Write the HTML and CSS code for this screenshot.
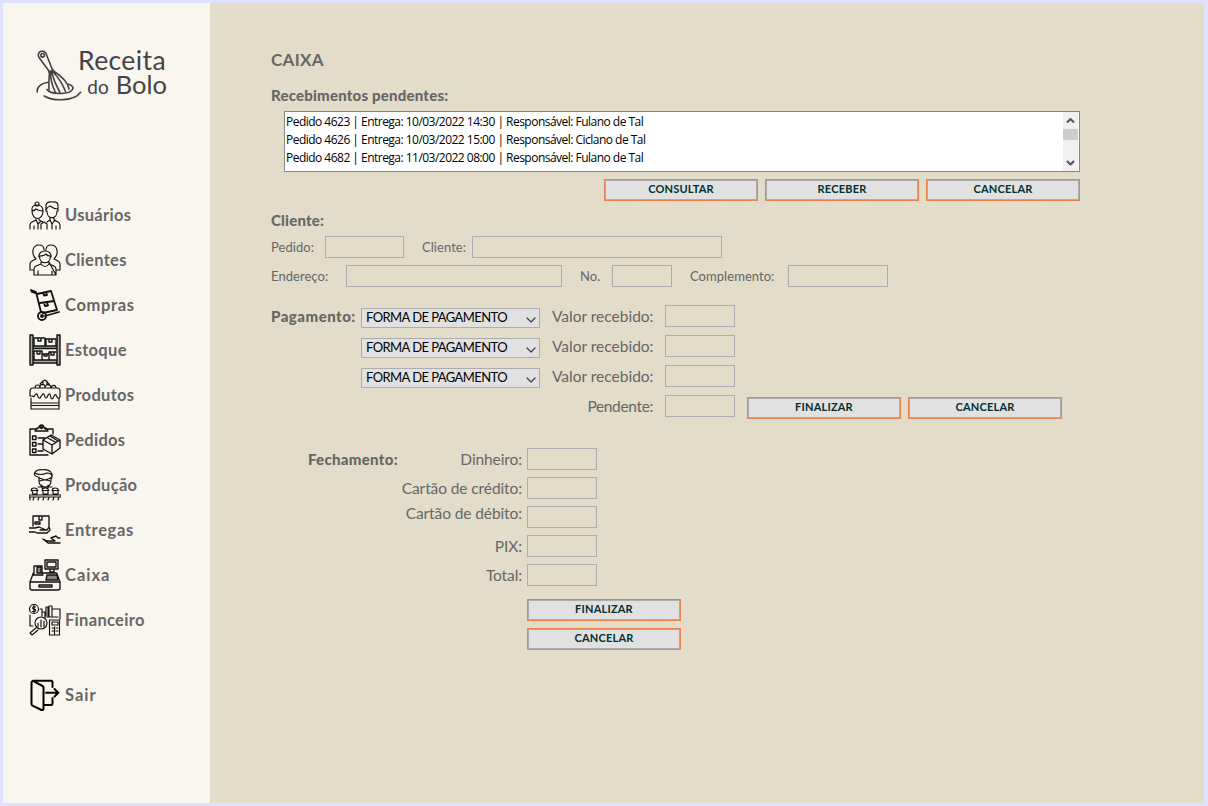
FILE: index.html
```html
<!DOCTYPE html>
<html lang="pt-BR">
<head>
<meta charset="utf-8">
<title>Receita do Bolo - Caixa</title>
<link rel="stylesheet" href="styles.css">
</head>
<body>
<div class="window">
  <aside class="sidebar">
    <div class="logo">
      <svg class="whisk" viewBox="0 0 48 56" width="48" height="56">
        <path d="M13 23 3 9.500C0 3.500 7.500 1 10 5.500L16.500 22M12.500 24l5-2"/><circle cx="6.600" cy="7.300" r="1.800"/>
        <path d="M13.500 24q-1 10-.5 18M14.500 24q0 11 5 20.500M15.500 24q3 11 8.500 20.500M16.500 23.500q9 9 13 20M17.500 23q14 9 15.500 18"/>
        <path d="M1.300 44c-1-5 4-9 11-9.700M11 41.500c3 5 21 5.500 25 .5 2-2 1-4.500-3.500-5.700M8.200 48c9 5.500 30 5.500 36.400-3.700"/>
      </svg>
      <div class="brand"><div class="brand-top">Receita</div><div class="brand-bottom"><span class="brand-do">do</span><span>Bolo</span></div></div>
    </div>
    <nav class="menu">
      <a class="item"><svg viewBox="0 -2 32 32"><path d="M1 28v-4q0-2 2-3l4-2v-2M10 17v2l4 2M18 21l3-2v-2M25 17v2l4 2q2 1 2 3v4M5 28v-3M27 28v-3M12 28v-5l3-2 3 2v5M7 19l2 4 3-3M21 19l2 4 3-4M9 23v5M23 23v5M3 10q-1-6 5-6t6 6M3 10q2 0 4-2 3 2 7 2M3 10c0 10 11 10 11 0M17 10V4q1-4 6-3 7-1 6 5v4M17 9q1-3 4-4 4 3 8 3M18 10c0 9 10 9 10 0"/><circle cx="8" cy="3" r="2"/></svg><span>Usuários</span></a>
      <a class="item"><svg viewBox="0 0 32 32"><path d="M5 31v-6q0-2 2-3l5-2v-2M20 18v2l5 2q2 1 2 3v6zM5 31h22M9 31v-4M23 31v-4M12 20q4 5 8 0M10.500 12c0 9 11 9 11 0M10 13c-1-8 13-8 12 0M10.500 12q5 0 6-2 2 2 5 2M5 26H1v-6q0-2 2-3l4-2c-5-5-4-14 3-14 3 0 5 2 5 5M27 26h4v-6q0-2-2-3l-4-2c5-5 4-14-3-14-3 0-5 2-5 5"/></svg><span>Clientes</span></a>
      <a class="item bold wide"><svg viewBox="0 0 32 32"><path d="M2 1l5 2 5 20M16 27l14-4M2 1l1 2 3 1M8 5l14-3 6 19-14 3M11 14l14-2M14 3.500l1 3 3-.5-1-3M15 14l1 3 3-.5-1-3"/><circle cx="13" cy="27" r="4"/><circle cx="13" cy="27" r="1"/></svg><span>Compras</span></a>
      <a class="item bold shelf"><svg viewBox="0 0 32 32"><path class="gray" d="M1 1h3v30H1zM28 1h3v30h-3zM4 12h24v2.500H4zM4 26h24v3H4z"/><path d="M5 11.500V4h11v7.500M17 11.500V5h10v6.500M9 4v3h3V4M20 5v3h3V5M5 25.500V17h8v8.500M13 20h7v5.500M20 18h7M20 18v7M8 17v3h3v-3M15 20v2h3v-2M22 18v3h3v-3"/></svg><span>Estoque</span></a>
      <a class="item"><svg viewBox="0 0 32 32"><path d="M1 17v-5q0-3 3-3h24q3 0 3 3v6c-2 3-3 0-4-2-2-2-2 4-4 4s-1-6-3-5-1 4-3 4-1-5-3-4-2 5-4 4-1-5-3-4-1 4-3 2zM2 19v11h28V19M2 24h28M2 26.500h28M6 9c0-4 5-4 5 0 0-5 5-5 5 0 0-5 6-4 6 0 1-4 5-3 5 0M11 5l3-3 2-1 4 4M14 3v3M18 2v4"/></svg><span>Produtos</span></a>
      <a class="item bold-ish"><svg viewBox="0 0 32 32"><path d="M8 5H1v26h18M16 5h8v5M6 7l2-3h2c0-4 5-4 5 0h2l2 3zM3.500 12h3.500v3.500H3.500zM3.500 18.500h3.500V22H3.500zM3.500 25h3.500v3.500H3.500zM9 14h7M9 20h4M9 27h5M14 16l8-5 9 5v8l-8 6-9-5zM14 16l9 5 8-5M23 21v9M18 13.500l9 5M21 12l8 5"/><circle cx="12.500" cy="3.500" r="1"/></svg><span>Pedidos</span></a>
      <a class="item"><svg viewBox="0 0 32 32"><path d="M9 8C2 6 6 0 14 .7c8-.7 11 5 8 9.300M6 4q5 3 12 0 4 0 5 3M10 8v4c0 8 12 8 12 0V8M10 9l6 2 6-2M11 12q5-2 10 0M13 16v3M19 16v3M9 18h14M0 26h32v2H0zM4 31l1-3M9 31l1-3M14 31l1-3M19 31l1-3M24 31l1-3M29 31l1-3M1 28v3M3 22c-3-4 7-4 5 0v3H4zM14 22c-3-4 7-4 5 0v3h-5zM24 22c-3-4 7-4 5 0v3h-5zM2 21.500h7M13 21.500h7M23 21.500h7"/></svg><span>Produção</span></a>
      <a class="item bold-ish wide"><svg viewBox="0 0 32 32"><path d="M4 12V2h16v11M10 2v4h3V2M6 8h5v2H6zM0 14h6l4-1 7 3M11 16h7l2-3 1 3-3 3H8l-2-1H0M14 25l4 2h8l-4-3 5-2 2 2h2M14 25l5 4h12M18 27h8"/></svg><span>Entregas</span></a>
      <a class="item bold-ish wider"><svg viewBox="0 0 32 32"><path class="dark" d="M18 16h10l1 5H17zM8 8h4v6H8z"/><path d="M16 1h13v9H16zM18 3h9v5h-9zM21 10v3h4v-3M5 15V7h8v8M13 14h14q1 0 1 1l3 8H1l3-8q0-1 1-1M1 23v6q0 2 2 2h26q2 0 2-2v-6M10 26h13v2H10zM4 16h10"/></svg><span>Caixa</span></a>
      <a class="item"><svg viewBox="0 0 32 32"><path d="M1 11v11h3M11 5h2v7M13 12V8h3v6M17 12V3h2v9M20 12V2h3v10M24 5h7v10M18 13h11M20.500 16h10v15h-10zM23 18h6v3h-6zM23 24h2M27 24h2M23 27h2M27 27h2M25.500 23v7M7 24l-6 5 2 2 6-5M9 19v4M12 16v7M15 17v6M6.500 3C3 2 3 5 5 5s3 3-1.500 2.500M5 1.500v7"/><circle cx="5" cy="5" r="4.500"/><circle cx="12" cy="19" r="6"/></svg><span>Financeiro</span></a>
      <a class="item exit wider"><svg viewBox="0 0 32 32"><path d="M2.500 4v21q0 1 1 1.600l9 4.400q2 .5 2-1.500V8.500q0-1-1-1.500L5 2.300Q2.500 1.500 2.500 4M4 1.700h18q1.500 0 1.500 1.500V8M15 26h7q1.500 0 1.500-1.500V19M17 13.800h12M25.500 10l3.800 3.800-3.800 3.800"/></svg><span>Sair</span></a>
    </nav>
  </aside>

  <main class="content">
    <h1 class="title">CAIXA</h1>
    <h2 class="heading pending">Recebimentos pendentes:</h2>
    <div class="listbox">
      <ul class="orders">
        <li>Pedido 4623 | Entrega: 10/03/2022 14:30 | Responsável: Fulano de Tal</li>
        <li>Pedido 4626 | Entrega: 10/03/2022 15:00 | Responsável: Ciclano de Tal</li>
        <li>Pedido 4682 | Entrega: 11/03/2022 08:00 | Responsável: Fulano de Tal</li>
      </ul>
      <div class="scrollbar">
        <svg class="arrow" viewBox="0 0 15 17"><path d="M4 10.500 7.500 7l3.500 3.500"/></svg>
        <div class="thumb"></div>
        <svg class="arrow last" viewBox="0 0 15 17"><path d="M4 7l3.500 3.500L11 7"/></svg>
      </div>
    </div>
    <div class="buttons list-buttons"><button class="btn">CONSULTAR</button><button class="btn">RECEBER</button><button class="btn">CANCELAR</button></div>

    <h2 class="heading client">Cliente:</h2>
    <div class="row small"><label class="w-order">Pedido:</label><i class="field f-order"></i><label class="w-client">Cliente:</label><i class="field f-client"></i></div>
    <div class="row small"><label class="w-address">Endereço:</label><i class="field f-address"></i><label class="w-number">No.</label><i class="field f-number"></i><label class="w-extra">Complemento:</label><i class="field f-extra"></i></div>

    <section class="payment">
      <h2 class="heading">Pagamento:</h2>
      <div class="pay-lines">
        <div class="pay-row"><div class="select"><span>FORMA DE PAGAMENTO</span><svg viewBox="0 0 10 6"><path d="M1 1l4 4 4-4"/></svg></div><label>Valor recebido:</label><i class="field"></i></div>
        <div class="pay-row"><div class="select"><span>FORMA DE PAGAMENTO</span><svg viewBox="0 0 10 6"><path d="M1 1l4 4 4-4"/></svg></div><label>Valor recebido:</label><i class="field"></i></div>
        <div class="pay-row"><div class="select"><span>FORMA DE PAGAMENTO</span><svg viewBox="0 0 10 6"><path d="M1 1l4 4 4-4"/></svg></div><label>Valor recebido:</label><i class="field"></i></div>
        <div class="pay-row"><label class="due">Pendente:</label><i class="field"></i><div class="buttons pay-buttons"><button class="btn">FINALIZAR</button><button class="btn">CANCELAR</button></div></div>
      </div>
    </section>

    <section class="closing">
      <h2 class="heading">Fechamento:</h2>
      <div class="totals">
        <label>Dinheiro:</label><i class="field"></i>
        <label>Cartão de crédito:</label><i class="field"></i>
        <label class="raised">Cartão de débito:</label><i class="field"></i>
        <label>PIX:</label><i class="field"></i>
        <label>Total:</label><i class="field"></i>
      </div>
    </section>
    <div class="buttons closing-buttons"><button class="btn">FINALIZAR</button><button class="btn">CANCELAR</button></div>
  </main>
</div>
</body>
</html>
```
FILE: styles.css
```css
* { box-sizing: border-box; }
body { margin: 0; font-family: Lato, "Open Sans", sans-serif; color: #666; }
.window { display: flex; width: 1208px; height: 806px; border: 3px solid #e0e0ff; border-right-width: 4px; background: #e3dcc8; overflow: hidden; }
svg { fill: none; stroke: #111; stroke-linecap: round; stroke-linejoin: round; }

.sidebar { width: 207px; flex: none; background: #f9f6ef; padding-top: 45px; }
.logo { display: flex; height: 56px; padding-left: 33px; color: #444446; }
.whisk { flex: none; stroke: #444446; stroke-width: 1.6; }
.brand { margin: 0 0 0 -6px; width: 90px; font-size: 26.5px; line-height: 24px; white-space: nowrap; }
.brand-top { height: 24px; letter-spacing: .4px; }
.brand-bottom { display: flex; align-items: baseline; justify-content: flex-end; gap: 7px; padding-right: 1px; font-size: 25.5px; }
.brand-do { font-size: 19px; }
.menu { padding: 95px 0 0 26px; }
.item { display: flex; align-items: center; height: 32px; margin-bottom: 13px; gap: 4px; font-size: 16.5px; font-weight: 700; letter-spacing: .3px; }
.item svg { width: 32px; height: 32px; stroke-width: 1.15; }
.item span { height: 21px; line-height: 20px; }
.item.wide { letter-spacing: .65px; }
.item.wider { letter-spacing: 1px; }
.item.bold svg { stroke-width: 1.8; }
.item.shelf svg { stroke-width: 1.4; }
.item.bold-ish svg { stroke-width: 1.35; }
.item.exit { margin-top: 43px; }
.item.exit svg { stroke: #000; stroke-width: 2; }
.gray { fill: #aaa9a3; }
.dark { fill: #888; }

.content { flex: 1; padding: 47px 0 0 61px; }
h1, h2 { margin: 0; white-space: nowrap; font-weight: 700; }
.title { font-size: 17px; line-height: 20px; letter-spacing: .3px; }
.heading { font-size: 15px; line-height: 20px; height: 20px; font-weight: 900; letter-spacing: .2px; }
.pending { margin-top: 15px; }
.listbox { display: flex; width: 796px; height: 61px; margin: 6px 0 0 13px; padding: 1px; background: #fff; border: 1px solid #828790; }
.orders { flex: 1; margin: 0; padding: 0; list-style: none; color: #000; font: 12px/18px "Open Sans", sans-serif; letter-spacing: -.52px; white-space: nowrap; }
.scrollbar { width: 15px; background: #f0f0f0; display: flex; flex-direction: column; margin-top: -1px; margin-bottom: -1px; }
.arrow { width: 15px; height: 17px; stroke: #505050; stroke-width: 2; stroke-linecap: butt; }
.thumb { height: 11px; background: #cdcdcd; }
.last { margin-top: auto; }
.buttons { display: flex; gap: 7px; }
.btn { width: 154px; height: 22px; padding: 0 0 3px; border: 1px solid #e8834f; background: #e1e1e1; box-shadow: inset 0 0 0 1px #adadad; color: #003030; font: 700 11px/17px Lato, sans-serif; letter-spacing: .2px; }
.list-buttons { margin: 7px 0 0 333px; }

.client { margin: 9px 0 6px; }
.row { display: flex; height: 22px; margin-bottom: 7px; line-height: 23px; }
.small { font-size: 13px; letter-spacing: .05px; }
label { white-space: nowrap; }
.field { display: block; height: 22px; border: 1px solid #abadb3; }
.w-order { width: 54px; }
.f-order { width: 79px; margin-right: 18px; }
.w-client { width: 50px; }
.f-client { width: 250px; }
.w-address { width: 75px; }
.f-address { width: 216px; margin-right: 18px; }
.w-number { width: 32px; }
.f-number { width: 60px; margin-right: 18px; }
.w-extra { width: 98px; }
.f-extra { width: 100px; }

.payment { display: flex; margin-top: 18px; height: 120px; }
.payment .heading { width: 90px; line-height: 22px; letter-spacing: .5px; }
.pay-row { display: flex; height: 30px; font-size: 15.500px; }
.pay-row label { width: 125px; padding-left: 12px; line-height: 22px; }
.pay-row .due { width: 304px; padding: 0 12px 0 0; text-align: right; letter-spacing: -.35px; }
.pay-row .field, .totals .field { width: 70px; }
.select { display: flex; justify-content: space-between; align-items: center; width: 179px; height: 20px; margin-top: 3px; padding: 0 3px 0 4px; border: 1px solid #abadb3; background: #e1e1e1; color: #000; font-size: 13px; letter-spacing: -.57px; white-space: nowrap; }
.select span { height: 18px; line-height: 16px; }
.select svg { width: 10px; height: 6px; margin-top: 3px; stroke: #404040; stroke-width: 1.2; }
.pay-buttons { margin: 2px 0 0 12px; }

.closing { display: flex; margin: 23px 0 0 37px; }
.closing .heading { width: 90px; line-height: 22px; letter-spacing: .3px; }
.totals { display: grid; grid-template-columns: 124px 70px; column-gap: 5px; row-gap: 7px; font-size: 15.500px; letter-spacing: -.1px; line-height: 22px; text-align: right; }
.totals label { height: 22px; }
.totals .raised { line-height: 14px; }
.closing-buttons { flex-direction: column; margin: 13px 0 0 256px; }
```
